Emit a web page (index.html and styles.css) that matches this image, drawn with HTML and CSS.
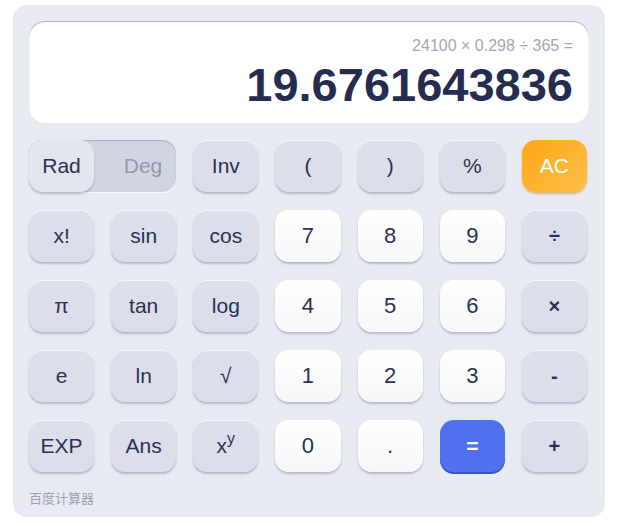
FILE: index.html
```html
<!DOCTYPE html>
<html lang="zh-CN">
<head>
    <meta charset="UTF-8">
    <title>百度计算器</title>
    <link rel="stylesheet" href="styles.css">
</head>
<body>
    <div class="calc">
        <div class="screen">
            <div class="expr">24100 × 0.298 ÷ 365 =</div>
            <div class="result">19.6761643836</div>
        </div>

        <div class="keys">
            <div class="toggle">
                <span class="mode active">Rad</span>
                <span class="mode">Deg</span>
            </div>
            <button class="key">Inv</button>
            <button class="key">(</button>
            <button class="key">)</button>
            <button class="key">%</button>
            <button class="key clear">AC</button>

            <button class="key">x!</button>
            <button class="key">sin</button>
            <button class="key">cos</button>
            <button class="key num">7</button>
            <button class="key num">8</button>
            <button class="key num">9</button>
            <button class="key op">÷</button>

            <button class="key">π</button>
            <button class="key">tan</button>
            <button class="key">log</button>
            <button class="key num">4</button>
            <button class="key num">5</button>
            <button class="key num">6</button>
            <button class="key op">×</button>

            <button class="key">e</button>
            <button class="key">ln</button>
            <button class="key">√</button>
            <button class="key num">1</button>
            <button class="key num">2</button>
            <button class="key num">3</button>
            <button class="key op">-</button>

            <button class="key">EXP</button>
            <button class="key">Ans</button>
            <button class="key">x<sup>y</sup></button>
            <button class="key num">0</button>
            <button class="key num">.</button>
            <button class="key equals">=</button>
            <button class="key op">+</button>
        </div>

        <div class="brand">百度计算器</div>
    </div>
</body>
</html>
```

FILE: styles.css
```css
body {
    margin: 0;
    padding: 0;
    background: #fff;
    font-family: Arial, "Liberation Sans", "Noto Sans CJK SC", sans-serif;
}

.calc {
    width: 560px;
    margin: 5px 0 0 13px;
    padding: 16px 16px 11px;
    background: #e8eaf2;
    border-radius: 14px;
}

.screen {
    height: 102px;
    box-sizing: border-box;
    padding: 14px 16px 0;
    background: #fff;
    border-radius: 16px;
    box-shadow: inset 0 1px 1px #a4a7bb;
    text-align: right;
}

.expr {
    font-size: 16px;
    line-height: 22px;
    color: #a3a6b8;
}

.result {
    margin-top: 1px;
    font-size: 47px;
    line-height: 54px;
    font-weight: bold;
    color: #262c50;
}

.keys {
    display: grid;
    grid-template-columns: repeat(7, 1fr);
    grid-auto-rows: 52px;
    column-gap: 17px;
    row-gap: 18px;
    margin: 17px 2px 0 0;
}

.key {
    border: none;
    border-radius: 14px;
    background: #dcdfea;
    color: #2b3152;
    font-family: inherit;
    font-size: 21px;
    padding: 0;
    box-shadow: 0 2px 2px rgba(120, 125, 160, 0.45), inset 0 1px 0 rgba(255, 255, 255, 0.7);
    cursor: pointer;
}

.key sup {
    font-size: 16px;
    line-height: 0;
    vertical-align: 9px;
}

.num {
    background: linear-gradient(#ffffff, #f6f7f9);
    font-size: 22px;
}

.op {
    font-size: 20px;
    font-weight: bold;
}

.clear {
    background: linear-gradient(135deg, #ffa616, #ffbf4a);
    color: #fff;
    box-shadow: 0 2px 2px rgba(215, 140, 20, 0.55);
}

.equals {
    background: #5070f0;
    color: #fff;
    font-weight: bold;
    box-shadow: 0 2px 0 #3a52c4;
}

.toggle {
    grid-column: span 2;
    display: flex;
    background: #d1d4e1;
    border-radius: 14px;
    box-shadow: inset 0 1px 1px rgba(130, 135, 165, 0.5), 0 1px 1px rgba(255, 255, 255, 0.8);
    font-size: 21px;
}

.mode {
    display: flex;
    align-items: center;
    color: #9397ae;
}

.mode.active {
    width: 65px;
    justify-content: center;
    background: #e3e5ef;
    color: #2b3152;
    border-radius: 14px;
    box-shadow: 0 2px 2px rgba(120, 125, 160, 0.45);
}

.mode:last-child {
    flex: 1;
    justify-content: flex-end;
    padding-right: 14px;
}

.brand {
    margin-top: 19px;
    font-size: 13px;
    line-height: 15px;
    color: #a0a2b2;
}
```
